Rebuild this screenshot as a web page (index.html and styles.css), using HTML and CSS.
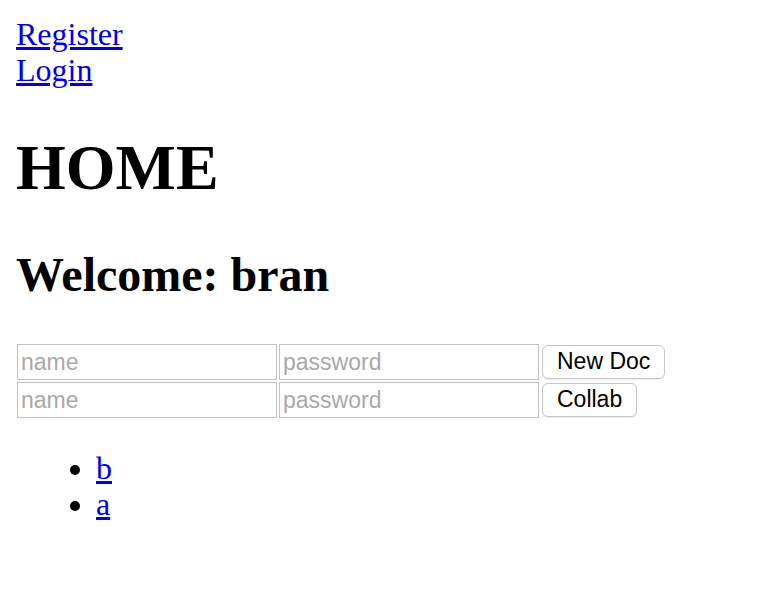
FILE: index.html
```html
<!DOCTYPE html>
<html>
<head>
<meta charset="utf-8">
<link rel="stylesheet" href="styles.css">
</head>
<body>
<div class="nav">
<a href="#">Register</a><br>
<a href="#">Login</a>
</div>
<h1 class="title">HOME</h1>
<h2 class="welcome">Welcome: bran</h2>
<form class="row"><input class="field" placeholder="name"><input class="field" type="password" placeholder="password"><button class="btn" type="button">New Doc</button></form>
<form class="row"><input class="field" placeholder="name"><input class="field" type="password" placeholder="password"><button class="btn" type="button">Collab</button></form>
<ul class="docs">
<li><a href="#">b</a></li>
<li><a href="#">a</a></li>
</ul>
</body>
</html>
```
FILE: styles.css
```css
body {
  margin: 16px;
  font-family: "Liberation Serif", "Times New Roman", serif;
  font-size: 32px;
  line-height: 36px;
  color: #000;
  background: #fff;
}
a { color: #0000ee; }
.title {
  font-size: 64px;
  line-height: 1.15;
  margin: 42.88px 0;
}
.welcome {
  font-size: 48px;
  line-height: 1.15;
  margin: 39.84px 0 41px 0;
}
.row {
  display: flex;
  align-items: center;
  gap: 2px;
  margin: 0 0 2px 1px;
  height: 36px;
}
.field {
  box-sizing: border-box;
  width: 260px;
  height: 36px;
  margin: 0;
  padding: 1px 3px 0 3px;
  border: 1px solid #c2c2c2;
  font-family: "Liberation Sans", Arial, sans-serif;
  font-size: 23px;
  color: #000;
  outline: none;
}
.field::placeholder { color: #a9a9a9; }
.btn {
  box-sizing: border-box;
  height: 34px;
  margin: 0 0 0 1px;
  padding: 0 14px;
  border: 1px solid #c8c8c8;
  border-radius: 6px;
  background: #fff;
  font-family: "Liberation Sans", Arial, sans-serif;
  font-size: 23px;
  color: #000;
  box-shadow: 0 1px 1px rgba(0,0,0,0.08);
}
.docs {
  margin: 32px 0;
  padding-left: 80px;
}
```
